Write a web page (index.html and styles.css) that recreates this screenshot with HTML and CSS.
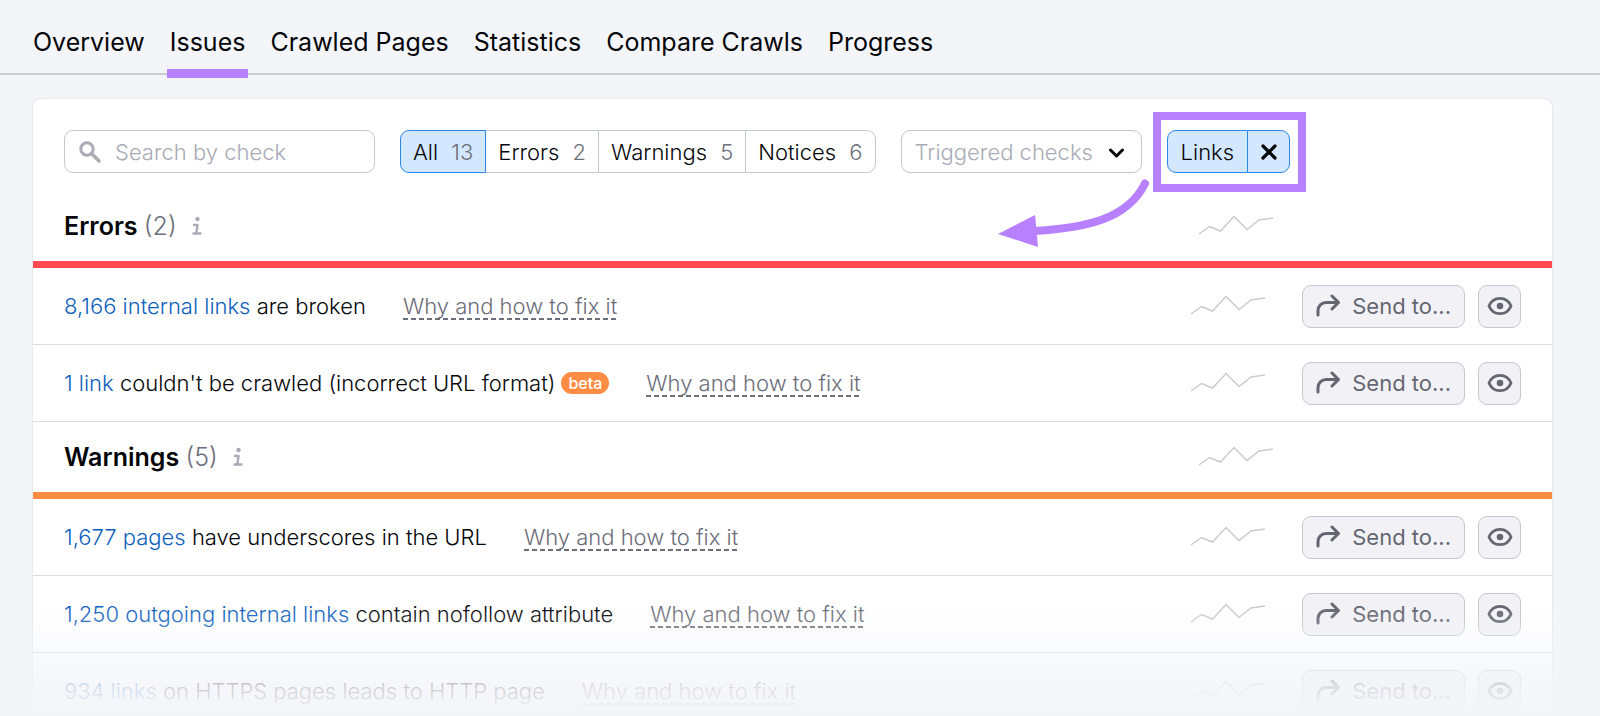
FILE: index.html
```html
<!DOCTYPE html>
<html lang="en">
<head>
    <meta charset="UTF-8">
    <meta name="viewport" content="width=device-width, initial-scale=1.0">
    <title>Site Audit: Issues</title>
    <link rel="stylesheet" href="styles.css">
</head>
<body>
    <!-- shared icons -->
    <svg class="sprite" aria-hidden="true">
        <symbol id="trend" viewBox="0 0 76 22">
            <path d="M1 19 11.500 11.500 22.500 16 36 1.500 49 14.500 61 5 75 3" fill="none" stroke="#cbccd1" stroke-width="1.500"/>
        </symbol>
        <symbol id="share" viewBox="0 0 24 24">
            <path d="M2 21v-4.500a8 8 0 0 1 8-8h12M16 2l6.500 6.500-6.500 6.500" fill="none" stroke="currentColor" stroke-width="3" stroke-linecap="round" stroke-linejoin="round"/>
        </symbol>
        <symbol id="eye" viewBox="0 0 26 20">
            <path d="M2 10C4 5 8 2.300 13 2.300S22 5 24 10C22 15 18 17.700 13 17.700S4 15 2 10z" fill="none" stroke="currentColor" stroke-width="2.800" stroke-linejoin="round"/>
            <circle cx="13" cy="10" r="3.300" fill="currentColor"/>
        </symbol>
        <symbol id="info" viewBox="0 0 10 20">
            <circle cx="5.500" cy="3" r="2.200" fill="currentColor"/>
            <path d="M2 9h3.500L4.300 17.500M1.500 17.500h7" fill="none" stroke="currentColor" stroke-width="2.400" stroke-linecap="round" stroke-linejoin="round"/>
        </symbol>
    </svg>

    <div class="page">
        <nav class="tabs">
            <a class="tab" href="#">Overview</a>
            <a class="tab active" href="#">Issues</a>
            <a class="tab" href="#">Crawled Pages</a>
            <a class="tab" href="#">Statistics</a>
            <a class="tab" href="#">Compare Crawls</a>
            <a class="tab" href="#">Progress</a>
        </nav>

        <main class="card">
            <div class="toolbar">
                <label class="search">
                    <svg class="search-icon" viewBox="0 0 22 22" aria-hidden="true">
                        <circle cx="8" cy="8" r="6.200" fill="none" stroke="currentColor" stroke-width="3"/>
                        <path d="M12.800 12.800 20 20" stroke="currentColor" stroke-width="3.400" stroke-linecap="round"/>
                    </svg>
                    <input type="text" placeholder="Search by check" aria-label="Search by check">
                </label>

                <div class="filters">
                    <button class="filter active">All <span class="count">13</span></button>
                    <button class="filter">Errors <span class="count">2</span></button>
                    <button class="filter">Warnings <span class="count">5</span></button>
                    <button class="filter">Notices <span class="count">6</span></button>
                </div>

                <div class="dropdown">
                    <select aria-label="Triggered checks">
                        <option>Triggered checks</option>
                    </select>
                    <svg class="chevron" viewBox="0 0 16 10" aria-hidden="true">
                        <path d="M2 2l6 6 6-6" fill="none" stroke="currentColor" stroke-width="3" stroke-linecap="round" stroke-linejoin="round"/>
                    </svg>
                </div>

                <div class="chip">
                    <button class="chip-name">Links</button>
                    <button class="chip-close" aria-label="Remove Links filter">
                        <svg viewBox="0 0 16 16" aria-hidden="true">
                            <path d="M2 2l12 12M14 2 2 14" stroke="currentColor" stroke-width="3.200" stroke-linecap="round"/>
                        </svg>
                    </button>
                    <span class="highlight"></span>
                    <svg class="arrow" viewBox="0 0 152 70" aria-hidden="true">
                        <path d="M147 5.500C129 42 86 50 37 53" fill="none" stroke="#b780ff" stroke-width="8" stroke-linecap="round"/>
                        <path d="M0 56 37 37 40 69z" fill="#b780ff"/>
                    </svg>
                </div>
            </div>

            <section>
                <div class="group-head errors">
                    <h2>Errors <span class="total">(2)</span></h2>
                    <svg class="info" aria-hidden="true"><use href="#info"/></svg>
                    <svg class="trend" aria-hidden="true"><use href="#trend"/></svg>
                </div>
                <ul class="issues">
                    <li class="issue">
                        <p><a href="#">8,166 internal links</a> are broken</p>
                        <button class="hint">Why and how to fix it</button>
                        <svg class="trend" aria-hidden="true"><use href="#trend"/></svg>
                        <button class="btn send"><svg aria-hidden="true"><use href="#share"/></svg>Send to...</button>
                        <button class="btn hide" aria-label="Hide"><svg aria-hidden="true"><use href="#eye"/></svg></button>
                    </li>
                    <li class="issue">
                        <p><a href="#">1 link</a> couldn't be crawled (incorrect URL format)</p>
                        <span class="badge">beta</span>
                        <button class="hint">Why and how to fix it</button>
                        <svg class="trend" aria-hidden="true"><use href="#trend"/></svg>
                        <button class="btn send"><svg aria-hidden="true"><use href="#share"/></svg>Send to...</button>
                        <button class="btn hide" aria-label="Hide"><svg aria-hidden="true"><use href="#eye"/></svg></button>
                    </li>
                </ul>
            </section>

            <section>
                <div class="group-head warnings">
                    <h2>Warnings <span class="total">(5)</span></h2>
                    <svg class="info" aria-hidden="true"><use href="#info"/></svg>
                    <svg class="trend" aria-hidden="true"><use href="#trend"/></svg>
                </div>
                <ul class="issues">
                    <li class="issue">
                        <p><a href="#">1,677 pages</a> have underscores in the URL</p>
                        <button class="hint">Why and how to fix it</button>
                        <svg class="trend" aria-hidden="true"><use href="#trend"/></svg>
                        <button class="btn send"><svg aria-hidden="true"><use href="#share"/></svg>Send to...</button>
                        <button class="btn hide" aria-label="Hide"><svg aria-hidden="true"><use href="#eye"/></svg></button>
                    </li>
                    <li class="issue">
                        <p><a href="#">1,250 outgoing internal links</a> contain nofollow attribute</p>
                        <button class="hint">Why and how to fix it</button>
                        <svg class="trend" aria-hidden="true"><use href="#trend"/></svg>
                        <button class="btn send"><svg aria-hidden="true"><use href="#share"/></svg>Send to...</button>
                        <button class="btn hide" aria-label="Hide"><svg aria-hidden="true"><use href="#eye"/></svg></button>
                    </li>
                    <li class="issue">
                        <p><a href="#">934 links</a> on HTTPS pages leads to HTTP page</p>
                        <button class="hint">Why and how to fix it</button>
                        <svg class="trend" aria-hidden="true"><use href="#trend"/></svg>
                        <button class="btn send"><svg aria-hidden="true"><use href="#share"/></svg>Send to...</button>
                        <button class="btn hide" aria-label="Hide"><svg aria-hidden="true"><use href="#eye"/></svg></button>
                    </li>
                </ul>
            </section>
        </main>
        <div class="fade"></div>
    </div>
</body>
</html>
```

FILE: styles.css
```css
* {
    box-sizing: border-box;
}
body {
    margin: 0;
    background: #f4f5f9;
    color: #050609;
    font-family: Inter, "Liberation Sans", sans-serif;
    font-size: 22px;
    font-weight: 300;
    line-height: 28px;
}
button, input, select {
    font: inherit;
    color: inherit;
    margin: 0;
}
button {
    cursor: pointer;
    white-space: nowrap;
}
.sprite {
    display: none;
}
.page {
    position: relative;
    height: 100vh;
    overflow: hidden;
}

/* tabs */
.tabs {
    display: flex;
    gap: 19px;
    height: 75px;
    padding: 0 30px;
    border-bottom: 2px solid #cbccd3;
}
.tab {
    position: relative;
    padding: 26px 3px 0;
    font-size: 25px;
    font-weight: 400;
    line-height: 32px;
    color: inherit;
    text-decoration: none;
}
.tab.active::after {
    content: "";
    position: absolute;
    left: 0;
    right: 0;
    bottom: -5px;
    height: 9px;
    background: #b780ff;
}

/* card */
.card {
    margin: 24px 48px 0 33px;
    background: white;
    border-radius: 8px;
    box-shadow: 0 0 2px rgba(25, 27, 35, 0.2);
}
.toolbar {
    display: flex;
    gap: 25px;
    padding: 31px 31px 18px;
}
.search {
    display: flex;
    align-items: center;
    gap: 14px;
    width: 311px;
    height: 43px;
    padding: 0 14px;
    border: 1px solid #c4c7cf;
    border-radius: 9px;
    color: #a9abb6;
}
.search-icon {
    flex: none;
    width: 22px;
    height: 22px;
}
.search input {
    flex: 1;
    min-width: 0;
    padding: 0;
    border: 0;
    outline: 0;
    background: none;
}
.search input::placeholder {
    color: #a9abb6;
    opacity: 1;
}
.filters {
    display: flex;
}
.filter {
    height: 43px;
    padding: 0 12px;
    margin-left: -1px;
    border: 1px solid #c4c7cf;
    background: white;
}
.filter:first-child {
    border-radius: 9px 0 0 9px;
    margin-left: 0;
}
.filter:last-child {
    border-radius: 0 9px 9px 0;
}
.filter.active {
    position: relative;
    border-color: #2b88e6;
    background: #d3e8ff;
}
.count {
    margin-left: 7px;
    color: #6c6e79;
}
.dropdown {
    position: relative;
    width: 241px;
}
.dropdown select {
    appearance: none;
    width: 100%;
    height: 43px;
    padding: 0 40px 0 13px;
    border: 1px solid #c4c7cf;
    border-radius: 9px;
    background: white;
    color: #a9abb6;
}
.chevron {
    position: absolute;
    right: 17px;
    top: 18px;
    width: 17px;
    height: 10px;
    pointer-events: none;
}
.chip {
    position: relative;
    display: flex;
}
.chip-name, .chip-close {
    height: 43px;
    border: 1px solid #2b88e6;
    background: #d3e8ff;
}
.chip-name {
    padding: 0 13px;
    border-radius: 9px 0 0 9px;
}
.chip-close {
    display: flex;
    align-items: center;
    justify-content: center;
    width: 43px;
    margin-left: -1px;
    padding: 0;
    border-radius: 0 9px 9px 0;
}
.chip-close svg {
    width: 16px;
    height: 16px;
}

/* callout over the chip */
.highlight {
    position: absolute;
    inset: -18px -16px -19px -14px;
    border: 8px solid #b780ff;
    pointer-events: none;
}
.arrow {
    position: absolute;
    left: -169px;
    top: 48px;
    width: 152px;
    height: 70px;
    pointer-events: none;
}

/* groups */
.group-head {
    display: flex;
    align-items: center;
    height: 77px;
    padding: 0 31px;
    border-bottom: 7px solid;
}
.group-head.errors {
    border-color: #ff4953;
}
.group-head.warnings {
    border-color: #ff8c43;
}
h2 {
    margin: 0;
    font-size: 25px;
    font-weight: 600;
    line-height: 32px;
}
.total {
    font-weight: 300;
    color: #6c6e79;
}
.info {
    width: 10px;
    height: 20px;
    margin-left: 15px;
    color: #a9abb6;
}
.trend {
    width: 76px;
    height: 22px;
    margin-left: auto;
}
.group-head .trend {
    margin-right: 247px;
}
.issues {
    margin: 0;
    padding: 0;
    list-style: none;
}
.issue {
    display: flex;
    align-items: center;
    height: 77px;
    padding: 0 31px;
    border-bottom: 1px solid #dcdee3;
}
.issue p {
    margin: 0;
}
.issue a {
    color: #0f5fbd;
    text-decoration: none;
}
.badge {
    margin-left: 6px;
    padding: 0 7px;
    border-radius: 11px;
    background: #ff8c43;
    color: white;
    font-size: 16px;
    font-weight: 500;
    line-height: 22px;
}
.hint {
    margin-left: 37px;
    padding: 0;
    border: 0;
    background: repeating-linear-gradient(90deg, #6c6e79 0 5px, transparent 5px 8px) bottom / 100% 2px no-repeat;
    color: #6c6e79;
}
.btn {
    display: flex;
    align-items: center;
    height: 43px;
    border: 1px solid #c4c7cf;
    border-radius: 9px;
    background: #f2f2f6;
    color: #646671;
    font-weight: 400;
}
.send {
    gap: 12px;
    margin-left: 36px;
    padding: 0 13px;
}
.send svg {
    width: 24px;
    height: 24px;
}
.hide {
    justify-content: center;
    width: 43px;
    margin-left: 13px;
    padding: 0;
}
.hide svg {
    width: 26px;
    height: 20px;
}

/* list fades into the page */
.fade {
    position: absolute;
    left: 0;
    right: 0;
    bottom: 0;
    height: 110px;
    background: linear-gradient(rgba(244, 245, 249, 0), rgba(244, 245, 249, 0.5) 45%, rgba(244, 245, 249, 0.85) 75%, #f4f5f9);
    pointer-events: none;
}
```
